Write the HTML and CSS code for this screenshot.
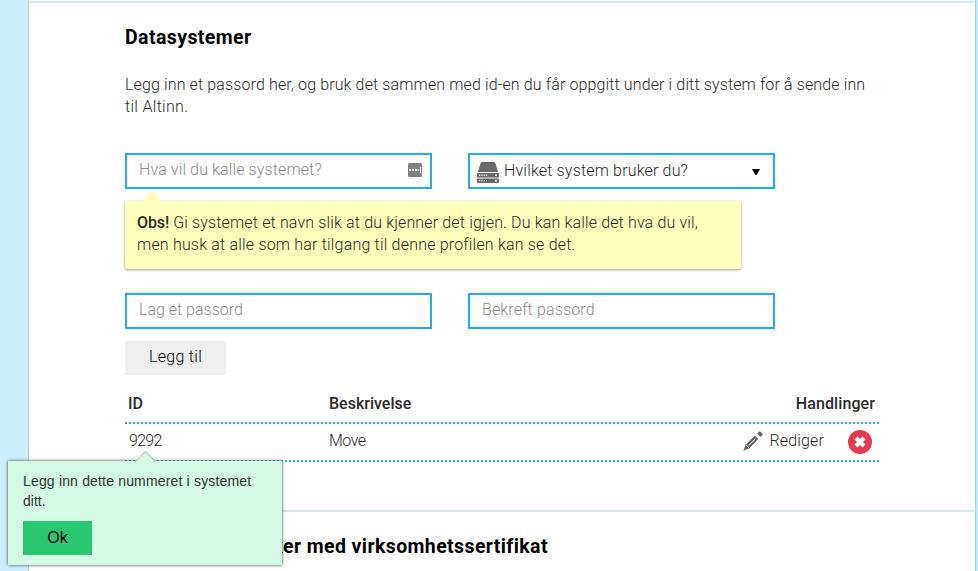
FILE: index.html
```html
<!DOCTYPE html>
<html lang="nb">
<head>
<meta charset="utf-8">
<title>Datasystemer</title>
<link rel="stylesheet" href="styles.css">
</head>
<body>
<main class="sheet">
  <section class="panel">
    <h2 class="title"><span class="t-title">Datasystemer</span></h2>
    <p class="intro"><span class="t-intro1">Legg inn et passord her, og bruk det sammen med id-en du får oppgitt under i ditt system for å sende inn</span><br><span class="t-intro2">til Altinn.</span></p>
    <div class="row">
      <div class="field"><span class="hint t-name">Hva vil du kalle systemet?</span>
        <svg class="key" width="14" height="14" viewBox="0 0 14 14"><rect width="14" height="14" rx="1.5" fill="#808080"/><path d="M1 6h2v2H1zM4 6h2v2H4zM7 6h2v2H7zM9.600 6h1v2h-1zM12 4h1v6h-1z" fill="#fff"/></svg>
      </div>
      <div class="field select">
        <svg class="server" width="22" height="21" viewBox="0 0 22 21"><path d="M5 0h12q1 0 1.400 1L21 10H1L3.600 1Q4 0 5 0z" fill="#696969"/><rect y="11" width="22" height="4.500" rx=".7" fill="#696969"/><rect y="16.500" width="22" height="4.500" rx=".7" fill="#696969"/><path d="M2 13.200h9M2 18.700h9" stroke="#fff" stroke-width="1.300" stroke-dasharray="1.300 1"/><path d="M18 13.200h2M18 18.700h2" stroke="#fff" stroke-width="1.500"/></svg>
        <span class="t-select">Hvilket system bruker du?</span>
        <svg class="caret" width="8" height="6" viewBox="0 0 8 6"><path d="M0 0h8L4.500 6h-1z"/></svg>
      </div>
    </div>
    <div class="note"><span class="t-note1"><b>Obs!</b> Gi systemet et navn slik at du kjenner det igjen. Du kan kalle det hva du vil,</span><br><span class="t-note2">men husk at alle som har tilgang til denne profilen kan se det.</span></div>
    <div class="row">
      <div class="field"><span class="hint">Lag et passord</span></div>
      <div class="field"><span class="hint t-confirm">Bekreft passord</span></div>
    </div>
    <button class="add"><span class="t-add">Legg til</span></button>
    <div class="table">
      <div class="tr head"><span>ID</span><span class="t-desc">Beskrivelse</span><span class="end t-act">Handlinger</span></div>
      <div class="tr">
        <span class="t-num">9292</span><span class="t-move">Move</span>
        <span class="actions">
          <svg class="pen" width="20" height="20" viewBox="0 0 20 20"><path d="M.4 19.500l2.200-6L12 4.700l3.400 3.400-9.200 9.300z" fill="#666"/><path d="M3.200 14l2.800 2.800M6 14.200l6.500-6.500" stroke="#fff" stroke-width="1"/><path d="M14.300 2.700l1.700-1.900q.7-.7 1.400 0l2 2q.6.700 0 1.400l-1.900 1.700z" fill="#666"/></svg>
          <span class="t-edit">Rediger</span>
          <svg class="del" width="24" height="24" viewBox="0 0 24 24"><circle cx="12" cy="12" r="12" fill="#e23b53"/><path d="M8 8l8 8M16 8l-8 8" stroke="#fff" stroke-width="4.200"/></svg>
        </span>
      </div>
    </div>
  </section>
  <section class="panel next"><h2 class="title"><span class="t-cert">ker med virksomhetssertifikat</span></h2></section>
</main>
<aside class="tip">
  <p><span class="t-tip">Legg inn dette nummeret i systemet</span><br><span>ditt.</span></p>
  <button class="ok">Ok</button>
</aside>
</body>
</html>
```
FILE: styles.css
```css
* { box-sizing: border-box; }
body { margin: 0; height: 571px; overflow: hidden; position: relative; background: #cef; font: 300 16px/22px Roboto, sans-serif; color: #2b2b2b; }
.sheet { margin: 0 3px 0 28px; height: 571px; overflow: hidden; background: #fff; border-left: 1px solid #add0e6; box-shadow: 1px 0 #a5d4e6, 2px 0 #c0e6f3; padding-top: 1px; }
.panel { border-top: 2px solid #d5e9f3; padding: 23px 96px 0; height: 509px; }
.panel span { white-space: nowrap; }
.title { margin: 0; font-size: 19.500px; line-height: 24px; font-weight: 700; color: #000; }
.t-title { letter-spacing: .4px; }
.t-cert { letter-spacing: .39px; }
.t-intro1 { letter-spacing: .126px; }
.t-intro2 { letter-spacing: .3px; }
.t-name { letter-spacing: .12px; }
.t-select { letter-spacing: .17px; }
.t-note1 { letter-spacing: .15px; }
.t-note2 { letter-spacing: .19px; }
.t-confirm { letter-spacing: .14px; }
.t-add { letter-spacing: .3px; }
.t-act { letter-spacing: .1px; }
.t-edit { letter-spacing: .15px; }
.t-move { letter-spacing: -.5px; }
.t-num { letter-spacing: -.7px; }
.t-tip { letter-spacing: .17px; }
.t-desc { margin-left: 1px; }
.intro { margin: 24px 0 35px; }
.row { display: flex; gap: 36px; }
.field { width: 307px; height: 36px; border: 2px solid #1eaef5; padding: 0 8px 2px 12px; display: flex; align-items: center; }
.hint { color: #8b8b8b; }
.key { margin: 0 0 1px auto; }
.select { padding: 0 13px 0 7px; }
.server { margin: 2px 5px 0 0; }
.caret { margin: 2px 0 0 auto; }
.note { position: relative; width: 616px; height: 68px; margin: 12px 0 24px; padding: 11px 12px; background: #fffebb; border-radius: 2px; box-shadow: 0 1px 3px rgba(0,0,0,.4); }
.note::before { content: ""; position: absolute; left: 16px; top: -10px; border: solid transparent; border-width: 0 11px 11px; border-bottom-color: #fffebb; }
.note b { font-weight: 500; letter-spacing: -.1px; }
.add { display: block; margin-top: 12px; width: 101px; height: 34px; border: 0; padding: 0 0 3px; background: #efefef; font: 300 16px Roboto, sans-serif; color: #000; }
.table { width: 754px; margin-top: 9px; }
.tr { display: grid; grid-template-columns: 200px 200px 1fr; height: 38px; padding: 0 4px 2px; align-items: center; border-bottom: 2px dotted #1eaef5; }
.head { height: 40px; padding: 2px 4px 0 3px; font-weight: 500; }
.end { justify-self: end; }
.actions { display: flex; align-items: center; justify-content: flex-end; padding-right: 3px; gap: 5px; }
.del { margin: 1px 0 0 19px; }
.pen { margin: 0 1px 1px 0; }
.next { height: 70px; }
.next .title { padding-left: 147.500px; }
.tip { position: absolute; left: 8px; top: 461px; width: 274px; height: 104px; background: #d4f9e4; box-shadow: 0 0 3px #333; padding: 10px 15px; font: 14px/20px "Liberation Sans", sans-serif; color: #333; }
.tip::before { content: ""; position: absolute; left: 130px; top: -7px; width: 14px; height: 14px; background: #d4f9e4; border: solid #bbb; border-width: 1px 0 0 1px; transform: rotate(45deg); }
.tip p { margin: 0; }
.ok { display: block; margin-top: 10px; width: 69px; height: 34px; border: 0; padding: 0; background: #29c76f; font: 16px "Liberation Sans", sans-serif; color: #000; }
```
